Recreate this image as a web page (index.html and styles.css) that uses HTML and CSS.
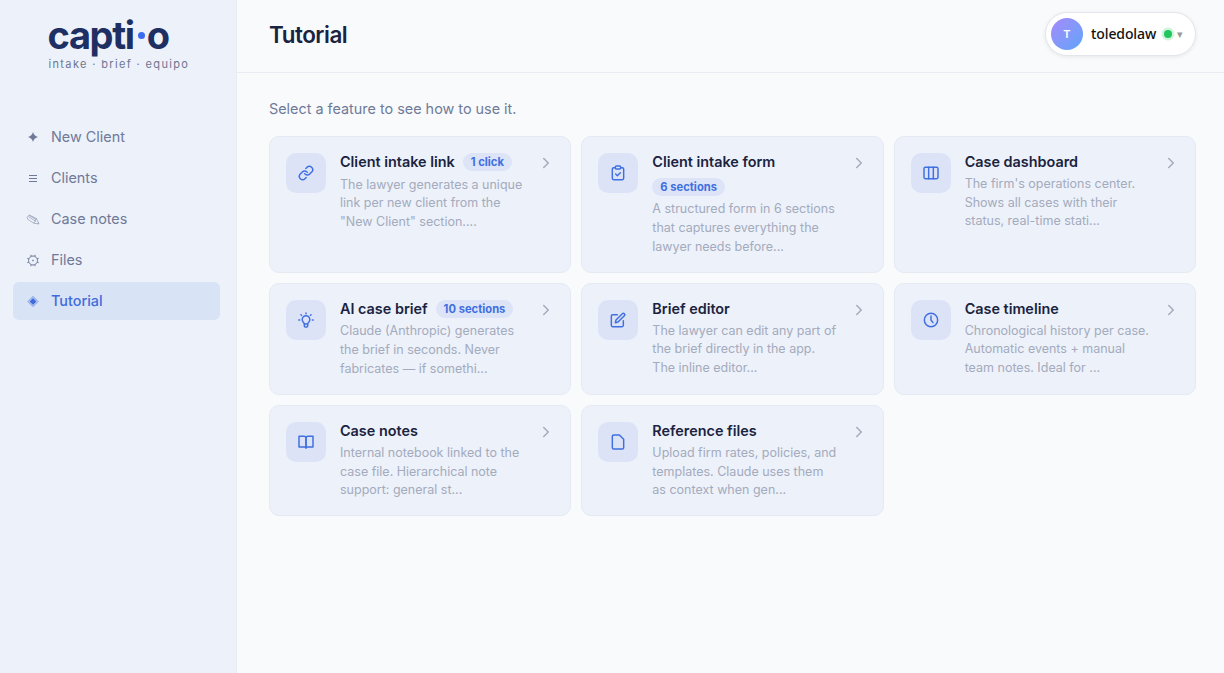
FILE: index.html
```html
<!DOCTYPE html>
<html lang="en">
<head>
  <meta charset="UTF-8" />
  <title>Captio - Tutorial</title>
  <link rel="stylesheet" href="styles.css">
</head>
<body>
  <aside class="sidebar">
    <div class="brand">
      <div class="logo">capti<span class="logo-dot"></span>o</div>
      <div class="tagline">intake · brief · equipo</div>
    </div>
    <nav class="nav">
      <a class="nav-item"><svg class="nav-icon solid" viewBox="0 0 14 14"><path d="M7 2c.9 3 2.200 4.100 5 5-2.800.9-4.100 2-5 5-.9-3-2.200-4.100-5-5 2.800-.9 4.100-2 5-5z"/></svg>New Client</a>
      <a class="nav-item"><svg class="nav-icon" viewBox="0 0 14 14"><path d="M3 4.500h8M3 7.500h8M3 10.500h8"/></svg>Clients</a>
      <a class="nav-item"><svg class="nav-icon thin" viewBox="0 0 14 14"><path d="M1.200 5.300 3.200 2.900 10.400 6.600 13 12 8 11.300 1.600 7.200zM2.400 4.600l7.200 4.600M3.400 3.600l6.600 3.800M8 11.300l2.400-4.700M11.600 11.700l.8-1.200"/></svg>Case notes</a>
      <a class="nav-item"><svg class="nav-icon" viewBox="0 0 14 14"><circle cx="7" cy="7.500" r="4.500"/><circle cx="7" cy="7.500" r=".5"/><path d="M5.300 3.300 4.800 1.800M8.700 3.300l.5-1.500M5.300 11.700l-.5 1.500M8.700 11.700l.5 1.500M2.800 5.800l-1.500-.5M2.800 9.200l-1.500.5M11.200 5.800l1.500-.5M11.200 9.200l1.500.5"/></svg>Files</a>
      <a class="nav-item active"><svg class="nav-icon gem" viewBox="0 0 14 14"><path class="gem-edge" d="M7 2.500 12 7.500 7 12.500 2 7.500z"/><path class="gem-core" d="M7 4 10.500 7.500 7 11 3.500 7.500z"/></svg>Tutorial</a>
    </nav>
  </aside>

  <main class="main">
    <header class="topbar">
      <h1>Tutorial</h1>
      <div class="user">
        <span class="avatar">T</span>
        <span class="user-name">toledolaw</span>
        <span class="status"></span>
        <span class="caret">▾</span>
      </div>
    </header>

    <section class="content">
      <p class="intro">Select a feature to see how to use it.</p>
      <div class="grid">
        <div class="card">
          <div class="card-icon"><svg viewBox="0 0 24 24"><path d="M10 13a5 5 0 0 0 7.54.54l3-3a5 5 0 0 0-7.07-7.07l-1.72 1.71"/><path d="M14 11a5 5 0 0 0-7.54-.54l-3 3a5 5 0 0 0 7.07 7.07l1.71-1.71"/></svg></div>
          <div class="card-body">
            <div class="card-head"><h3>Client intake link</h3><span class="badge">1 click</span></div>
            <p>The lawyer generates a unique<br>link per new client from the<br>"New Client" section....</p>
          </div>
          <svg class="chevron" viewBox="0 0 24 24"><path d="m9 18 6-6-6-6"/></svg>
        </div>

        <div class="card">
          <div class="card-icon"><svg viewBox="0 0 24 24"><path d="M8 4H5.500a2 2 0 0 0-2 2v14a2 2 0 0 0 2 2h13a2 2 0 0 0 2-2V6a2 2 0 0 0-2-2H16"/><rect x="8" y="1.500" width="8" height="4.500" rx="1.500"/><path d="m8.500 13.500 2.500 2.500 4.500-4.500"/></svg></div>
          <div class="card-body">
            <div class="card-head"><h3>Client intake form</h3><span class="badge">6 sections</span></div>
            <p>A structured form in 6 sections<br>that captures everything the<br>lawyer needs before...</p>
          </div>
          <svg class="chevron" viewBox="0 0 24 24"><path d="m9 18 6-6-6-6"/></svg>
        </div>

        <div class="card">
          <div class="card-icon"><svg viewBox="0 0 24 24"><rect x="1.500" y="3.500" width="21" height="17" rx="2"/><path d="M8.500 3.500v17M15.500 3.500v17"/></svg></div>
          <div class="card-body">
            <div class="card-head"><h3>Case dashboard</h3></div>
            <p>The firm's operations center.<br>Shows all cases with their<br>status, real-time stati...</p>
          </div>
          <svg class="chevron" viewBox="0 0 24 24"><path d="m9 18 6-6-6-6"/></svg>
        </div>

        <div class="card">
          <div class="card-icon"><svg viewBox="0 0 24 24"><path d="M9.500 18c0-1.200-.8-2-1.500-2.700a5.700 5.700 0 1 1 8 0c-.7.7-1.500 1.500-1.500 2.700z"/><path d="M9.500 18v3a1.500 1.500 0 0 0 1.500 1.500h2a1.500 1.500 0 0 0 1.500-1.500v-3M12 1.500v1M4.400 4l.8.8M19.600 4l-.8.8M1.200 12h1.300M21.500 12h1.300"/></svg></div>
          <div class="card-body">
            <div class="card-head"><h3>AI case brief</h3><span class="badge">10 sections</span></div>
            <p>Claude (Anthropic) generates<br>the brief in seconds. Never<br>fabricates — if somethi...</p>
          </div>
          <svg class="chevron" viewBox="0 0 24 24"><path d="m9 18 6-6-6-6"/></svg>
        </div>

        <div class="card">
          <div class="card-icon"><svg viewBox="0 0 24 24"><path d="M11 4H4a2 2 0 0 0-2 2v14a2 2 0 0 0 2 2h14a2 2 0 0 0 2-2v-7"/><path d="M18.500 2.500a2.120 2.120 0 0 1 3 3L12 15l-4 1 1-4z"/></svg></div>
          <div class="card-body">
            <div class="card-head"><h3>Brief editor</h3></div>
            <p>The lawyer can edit any part of<br>the brief directly in the app.<br>The inline editor...</p>
          </div>
          <svg class="chevron" viewBox="0 0 24 24"><path d="m9 18 6-6-6-6"/></svg>
        </div>

        <div class="card">
          <div class="card-icon"><svg viewBox="0 0 24 24"><circle cx="12" cy="12" r="10"/><path d="M12 6v6l3 4"/></svg></div>
          <div class="card-body">
            <div class="card-head"><h3>Case timeline</h3></div>
            <p>Chronological history per case.<br>Automatic events + manual<br>team notes. Ideal for ...</p>
          </div>
          <svg class="chevron" viewBox="0 0 24 24"><path d="m9 18 6-6-6-6"/></svg>
        </div>

        <div class="card">
          <div class="card-icon"><svg viewBox="0 0 24 24"><path d="M1.500 3.500H9a3 3 0 0 1 3 3V21a2.500 2.500 0 0 0-2.500-1.500h-8z"/><path d="M22.500 3.500H15a3 3 0 0 0-3 3V21a2.500 2.500 0 0 1 2.500-1.500h8z"/></svg></div>
          <div class="card-body">
            <div class="card-head"><h3>Case notes</h3></div>
            <p>Internal notebook linked to the<br>case file. Hierarchical note<br>support: general st...</p>
          </div>
          <svg class="chevron" viewBox="0 0 24 24"><path d="m9 18 6-6-6-6"/></svg>
        </div>

        <div class="card">
          <div class="card-icon"><svg viewBox="0 0 24 24"><path d="M14 1.500H5.500a2 2 0 0 0-2 2v17a2 2 0 0 0 2 2h13a2 2 0 0 0 2-2V8z"/></svg></div>
          <div class="card-body">
            <div class="card-head"><h3>Reference files</h3></div>
            <p>Upload firm rates, policies, and<br>templates. Claude uses them<br>as context when gen...</p>
          </div>
          <svg class="chevron" viewBox="0 0 24 24"><path d="m9 18 6-6-6-6"/></svg>
        </div>
      </div>
    </section>
  </main>
</body>
</html>
```
FILE: styles.css
```css
* { margin: 0; padding: 0; box-sizing: border-box; }
body {
  font-family: Inter, "Liberation Sans", sans-serif;
  background: #f9fafc;
  color: #1a2340;
  height: 100vh;
  overflow: hidden;
  display: flex;
}

/* sidebar */
.sidebar {
  width: 237px;
  flex-shrink: 0;
  background: #edf1fa;
  border-right: 1px solid #e8ecf5;
}
.brand {
  height: 117.6px;
  padding: 13px 0 0 47.5px;
}
.logo {
  display: flex;
  align-items: center;
  font-size: 38px;
  line-height: 44px;
  font-weight: 700;
  letter-spacing: -1.35px;
  color: #1e2f63;
}
.logo-dot {
  width: 7px;
  height: 7px;
  margin: 0 2px 0 4px;
  border-radius: 50%;
  background: #3b6cf0;
}
.tagline {
  padding-left: 1px;
  font-size: 11px;
  line-height: 15px;
  letter-spacing: 1.35px;
  color: #6d7690;
  white-space: nowrap;
}
.nav {
  display: flex;
  flex-direction: column;
  gap: 3px;
  padding: 0 16px 0 13px;
}
.nav-item {
  display: flex;
  align-items: center;
  gap: 11px;
  height: 38px;
  padding-left: 13px;
  border-radius: 6px;
  font-size: 14.4px;
  color: #6f7a99;
}
.nav-icon {
  width: 14px;
  height: 14px;
  fill: none;
  stroke: currentColor;
  stroke-width: 1;
}
.nav-icon.solid {
  fill: currentColor;
  stroke: none;
}
.nav-icon.thin { stroke-width: 0.5; }
.gem-edge { stroke-width: 0.7; }
.gem-core { fill: currentColor; stroke: none; }
.nav-item.active {
  background: #d8e3f5;
  color: #416bdc;
  font-weight: 500;
}

/* top bar */
.main { flex: 1; }
.topbar {
  display: flex;
  align-items: center;
  justify-content: space-between;
  height: 73px;
  padding: 0 28px 4px 32px;
  border-bottom: 1px solid #e9edf3;
}
h1 {
  font-size: 22.4px;
  font-weight: 600;
  letter-spacing: -0.45px;
}
.user {
  display: flex;
  align-items: center;
  width: 151px;
  height: 44px;
  padding: 0 5px;
  border: 1px solid #e3e6ea;
  border-radius: 22px;
  background: #fff;
  box-shadow: 0 1px 4px rgba(0,0,0,0.08);
}
.avatar {
  width: 32px;
  height: 32px;
  border-radius: 50%;
  background: linear-gradient(135deg, #a78bfa, #60a5fa);
  color: #fff;
  font-size: 11px;
  font-weight: 600;
  line-height: 32px;
  text-align: center;
}
.user-name {
  margin-left: 8px;
  font-family: "Noto Sans", sans-serif;
  font-size: 14px;
  line-height: 20px;
  letter-spacing: -0.1px;
  font-weight: 500;
  color: #111;
}
.status {
  width: 8px;
  height: 8px;
  margin-left: 8px;
  border-radius: 50%;
  background: #22c55e;
  box-shadow: 0 0 0 2.5px #cdf5db;
}
.caret {
  margin-left: 5px;
  font-size: 11px;
  color: #999;
}

/* feature cards */
.content { padding: 26px 28px 0 32px; }
.intro {
  font-size: 14.4px;
  line-height: 20px;
  color: #6f7a99;
  margin-bottom: 17px;
}
.grid {
  display: grid;
  grid-template-columns: repeat(3, 1fr);
  gap: 10px;
}
.card {
  display: flex;
  align-items: flex-start;
  gap: 14px;
  padding: 16px 16px 15.4px;
  background: #edf1fa;
  border: 1px solid #e4e9f3;
  border-radius: 10px;
}
.card-icon {
  display: flex;
  align-items: center;
  justify-content: center;
  width: 40px;
  height: 40px;
  flex-shrink: 0;
  border-radius: 10px;
  background: #dde3f7;
}
.card-icon svg {
  width: 16px;
  height: 16px;
  fill: none;
  stroke: #3f6fe0;
  stroke-width: 2.2;
  stroke-linecap: round;
  stroke-linejoin: round;
}
.card-body { flex: 1; min-width: 0; }
.card-head {
  display: flex;
  flex-wrap: wrap;
  align-items: center;
  gap: 7.4px 8px;
  margin-bottom: 4.5px;
}
h3 {
  font-size: 14.4px;
  line-height: 17.4px;
  font-weight: 600;
}
.badge {
  padding: 0 8px;
  border-radius: 9px;
  background: #dde4f8;
  color: #3f6fe0;
  font-size: 11.2px;
  line-height: 18px;
  font-weight: 700;
}
.card p {
  font-size: 12.5px;
  line-height: 18.72px;
  color: #a3abbd;
  white-space: nowrap;
}
.chevron {
  width: 18px;
  height: 18px;
  margin: 1px -1px 0;
  flex-shrink: 0;
  fill: none;
  stroke: #a3abbd;
  stroke-width: 2;
  stroke-linecap: round;
  stroke-linejoin: round;
}
```
